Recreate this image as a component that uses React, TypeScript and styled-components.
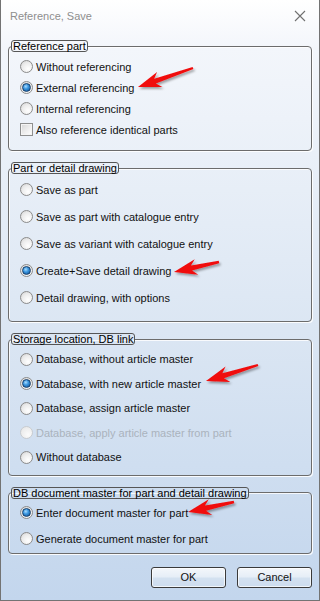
import React from 'react';
import styled, { createGlobalStyle } from 'styled-components';

const GlobalStyle = createGlobalStyle`
html, body {
  margin: 0;
  padding: 0;
  width: 320px;
  height: 601px;
  overflow: hidden;
  background: #ffffff;
}
* { box-sizing: border-box; }
`

const Window = styled.div`
position: relative;
width: 320px;
height: 601px;
display: flex;
flex-direction: column;
border-left: 1px solid #737373;
border-right: 1px solid #737373;
border-bottom: 1px solid #737373;
background: linear-gradient(180deg, #ffffff 0%, #f3f6fb 8%, #dbe6f3 55%, #c3d6ed 100%);
font-family: "Liberation Sans", Arial, sans-serif;
font-size: 11px;
color: #111;
`

const TitleBar = styled.div`
height: 31px;
flex-shrink: 0;
display: flex;
align-items: center;
justify-content: space-between;
padding: 0 13px 0 9px;
`

const Title = styled.span`
font-family: "Liberation Sans", Arial, sans-serif;
font-size: 11px;
color: #8e8e8e;
`

const Body = styled.div`
display: flex;
flex-direction: column;
gap: 11px;
padding: 9px 7px 0 7px;
`

const Group = styled.fieldset`
margin: 0;
padding: 0;
min-width: 0;
border: 1px solid #6c6c6c;
border-radius: 4px;
box-shadow: 1px 1px 0 rgba(255, 255, 255, 0.9), inset 1px 1px 0 rgba(255, 255, 255, 0.8);
`

const Legend = styled.legend`
margin-left: 2px;
padding: 0 1px;
font-size: 11px;
line-height: 10px;
border: 1px solid #565656;
border-radius: 3px;
color: #000;
`

const List = styled.div<{ $pt: number; $pb: number }>`
display: flex;
flex-direction: column;
padding: ${p => p.$pt}px 0 ${p => p.$pb}px 11px;
`

const Row = styled.label<{ $h: number; $disabled?: boolean }>`
height: ${p => p.$h}px;
display: flex;
align-items: center;
gap: 3px;
color: ${p => (p.$disabled ? '#aab3bd' : '#111')};
white-space: nowrap;
`

const Radio = styled.span<{ $checked?: boolean; $disabled?: boolean }>`
width: 13px;
height: 13px;
border-radius: 50%;
flex-shrink: 0;
display: flex;
align-items: center;
justify-content: center;
border: 1px solid ${p => (p.$disabled ? '#c8ccd0' : '#8b8b8b')};
background: ${p => (p.$disabled
    ? 'radial-gradient(circle at 65% 70%, #fbfbfb 0%, #eeeeee 60%, #e2e2e2 100%)'
    : 'radial-gradient(circle at 65% 70%, #ffffff 0%, #ececec 55%, #cfcfcf 100%)')};
&::after {
  content: '';
  display: ${p => (p.$checked ? 'block' : 'none')};
  width: 7px;
  height: 7px;
  border-radius: 50%;
  border: 1px solid #173f6b;
  background: radial-gradient(circle at 40% 35%, #a9dcff 0%, #3b97e0 40%, #0d4a8c 100%);
}
`

const Check = styled.span`
width: 13px;
height: 13px;
flex-shrink: 0;
border: 1px solid #8e8f8f;
background: linear-gradient(135deg, #d6d6d6 0%, #ececec 50%, #ffffff 100%);
box-shadow: inset 0 0 0 1px #f4f4f4;
`

const Buttons = styled.div`
display: flex;
justify-content: flex-end;
gap: 11px;
padding-top: 2px;
`

const Button = styled.button`
width: 75px;
height: 21px;
padding: 0;
border: 1px solid #3a3a3a;
border-radius: 3px;
font-family: "Liberation Sans", Arial, sans-serif;
font-size: 11px;
color: #111;
background: linear-gradient(180deg, #f4f7fb 0%, #e6eef7 45%, #d3e1f0 55%, #cddcee 100%);
box-shadow: inset 0 0 0 1px rgba(255, 255, 255, 0.7);
`

const Overlay = styled.svg`
position: absolute;
left: 0;
top: 0;
pointer-events: none;
`

type Item = { text: string; kind?: 'radio' | 'check'; checked?: boolean; disabled?: boolean };

type GroupDef = { title: string; rowH: number; pt: number; pb: number; items: Item[] };

const groups: GroupDef[] = [
  {
    title: 'Reference part', rowH: 21, pt: 4, pb: 10,
    items: [
      { text: 'Without referencing' },
      { text: 'External referencing', checked: true },
      { text: 'Internal referencing' },
      { text: 'Also reference identical parts', kind: 'check' },
    ],
  },
  {
    title: 'Part or detail drawing', rowH: 27, pt: 2, pb: 10,
    items: [
      { text: 'Save as part' },
      { text: 'Save as part with catalogue entry' },
      { text: 'Save as variant with catalogue entry' },
      { text: 'Create+Save detail drawing', checked: true },
      { text: 'Detail drawing, with options' },
    ],
  },
  {
    title: 'Storage location, DB link', rowH: 24.5, pt: 2, pb: 5,
    items: [
      { text: 'Database, without article master' },
      { text: 'Database, with new article master', checked: true },
      { text: 'Database, assign article master' },
      { text: 'Database, apply article master from part', disabled: true },
      { text: 'Without database' },
    ],
  },
  {
    title: 'DB document master for part and detail drawing', rowH: 26, pt: 1, pb: 1,
    items: [
      { text: 'Enter document master for part', checked: true },
      { text: 'Generate document master for part' },
    ],
  },
];

// red annotation arrows: [tailX, tailY, tipX, tipY]
const arrows = [
  [192, 68, 137, 87],
  [218, 262, 173, 272],
  [257, 365, 205, 381],
  [233, 502, 187, 512],
];

function arrowPoints(x1: number, y1: number, x2: number, y2: number) {
  const dx = x2 - x1, dy = y2 - y1;
  const len = Math.hypot(dx, dy);
  const ux = dx / len, uy = dy / len;
  const nx = -uy, ny = ux;
  const headLen = 22, headW = 8;
  const bx = x2 - ux * headLen, by = y2 - uy * headLen;
  const ix = bx + ux * 4, iy = by + uy * 4;
  const pts = [
    [x1 + nx * 1.2, y1 + ny * 1.2],
    [ix + nx * 2.6, iy + ny * 2.6],
    [bx - ux * 1 + nx * headW, by - uy * 1 + ny * headW],
    [x2, y2],
    [bx - ux * 1 - nx * headW, by - uy * 1 - ny * headW],
    [ix - nx * 2.6, iy - ny * 2.6],
    [x1 - nx * 1.2, y1 - ny * 1.2],
  ];
  return pts.map(p => p[0].toFixed(1) + ',' + p[1].toFixed(1)).join(' ');
}

function CloseIcon() {
  return (
    <svg width="12" height="12" viewBox="0 0 12 12">
      <path d="M1 1 L11 11 M11 1 L1 11" stroke="#707070" strokeWidth="1.1" fill="none" />
    </svg>
  );
}

export default function App() {
  return (
    <>
      <GlobalStyle />
      <Window>
        <TitleBar>
          <Title>Reference, Save</Title>
          <CloseIcon />
        </TitleBar>
        <Body>
          {groups.map(g => (
            <Group key={g.title}>
              <Legend>{g.title}</Legend>
              <List $pt={g.pt} $pb={g.pb}>
                {g.items.map(item => (
                  <Row key={item.text} $h={g.rowH} $disabled={item.disabled}>
                    {item.kind === 'check'
                      ? <Check />
                      : <Radio $checked={item.checked} $disabled={item.disabled} />}
                    {item.text}
                  </Row>
                ))}
              </List>
            </Group>
          ))}
          <Buttons>
            <Button>OK</Button>
            <Button>Cancel</Button>
          </Buttons>
        </Body>
        <Overlay width="320" height="601" viewBox="0 0 320 601">
          <defs>
            <filter id="arrowShadow" x="-20%" y="-50%" width="140%" height="200%">
              <feDropShadow dx="1.5" dy="2" stdDeviation="1.2" floodColor="#000" floodOpacity="0.35" />
            </filter>
          </defs>
          {arrows.map((a, i) => (
            <polygon key={i} points={arrowPoints(a[0], a[1], a[2], a[3])} fill="#f01010" filter="url(#arrowShadow)" />
          ))}
        </Overlay>
      </Window>
    </>
  );
}
